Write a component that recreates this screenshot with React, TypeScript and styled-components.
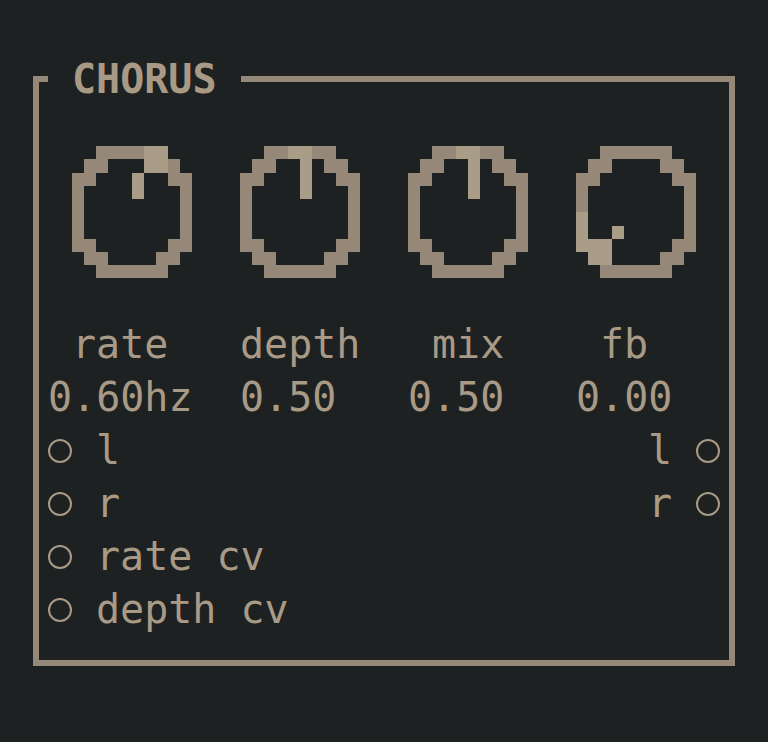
import styled, { createGlobalStyle } from "styled-components";

// terminal-like cell grid: every glyph cell is 24 x 53
const BG = "#1e2122";
const LINE = "#968878";
const LIT = "#aa9d87";
const TEXT = "#a89a85";

type Cell = [number, number]; // [row, col] on the 10 x 10 knob bitmap

type KnobData = {
  label: string;
  value: string;
  lit: Cell[];
  pointer: Cell[];
};

const RING_ROWS: number[][] = [
  [2, 3, 4, 5, 6, 7],
  [1, 2, 7, 8],
  [0, 1, 8, 9],
  [0, 9],
  [0, 9],
  [0, 9],
  [0, 9],
  [0, 1, 8, 9],
  [1, 2, 7, 8],
  [2, 3, 4, 5, 6, 7],
];

const RING: Cell[] = RING_ROWS.flatMap((cols, row) =>
  cols.map((col) => [row, col] as Cell)
);

const KNOBS: KnobData[] = [
  {
    label: "rate",
    value: "0.60hz",
    lit: [
      [0, 6],
      [0, 7],
      [1, 6],
      [1, 7],
    ],
    pointer: [
      [2, 5],
      [3, 5],
    ],
  },
  {
    label: "depth",
    value: "0.50",
    lit: [
      [0, 4],
      [0, 5],
    ],
    pointer: [
      [1, 5],
      [2, 5],
      [3, 5],
    ],
  },
  {
    label: "mix",
    value: "0.50",
    lit: [
      [0, 4],
      [0, 5],
    ],
    pointer: [
      [1, 5],
      [2, 5],
      [3, 5],
    ],
  },
  {
    label: "fb",
    value: "0.00",
    lit: [
      [5, 0],
      [6, 0],
      [7, 0],
      [7, 1],
      [7, 2],
      [8, 1],
      [8, 2],
    ],
    pointer: [[6, 3]],
  },
];

const INPUTS = ["l", "r", "rate cv", "depth cv"];
const OUTPUTS = ["l", "r"];

// knob i starts at grid column 2 + 7i and is 5 cells wide
const knobCol = (i: number) => 2 + i * 7;
const centred = (i: number, text: string) =>
  knobCol(i) + Math.floor((5 - text.length) / 2);

const GlobalStyle = createGlobalStyle`
  html, body {
    margin: 0;
    background: ${BG};
  }
  body {
    font-family: "DejaVu Sans Mono", "Liberation Mono", monospace;
  }
  #root {
    display: flow-root;
  }
`;

const Knob = ({ data, col }: { data: KnobData; col: number }) => (
  <StyledKnob
    $col={col}
    viewBox="0 0 10 10"
    preserveAspectRatio="none"
    shapeRendering="crispEdges"
  >
    {RING.map(([r, c]) => (
      <rect key={`r${r}-${c}`} x={c} y={r} width={1} height={1} fill={LINE} />
    ))}
    {[...data.lit, ...data.pointer].map(([r, c]) => (
      <rect key={`l${r}-${c}`} x={c} y={r} width={1} height={1} fill={LIT} />
    ))}
  </StyledKnob>
);

const App = () => (
  <>
    <GlobalStyle />
    <StyledPanel>
      <StyledTitle>CHORUS</StyledTitle>
      <StyledGrid>
        {KNOBS.map((knob, i) => (
          <Knob key={knob.label} data={knob} col={knobCol(i)} />
        ))}
        {KNOBS.map((knob, i) => (
          <StyledText
            key={`label-${knob.label}`}
            $col={centred(i, knob.label)}
            $row={5}
            $len={knob.label.length}
          >
            {knob.label}
          </StyledText>
        ))}
        {KNOBS.map((knob, i) => (
          <StyledText
            key={`value-${knob.label}`}
            $col={centred(i, knob.value)}
            $row={6}
            $len={knob.value.length}
          >
            {knob.value}
          </StyledText>
        ))}
        {INPUTS.map((name, i) => (
          <StyledPortGroup key={`in-${name}`}>
            <StyledJack $col={1} $row={7 + i} />
            <StyledText $col={3} $row={7 + i} $len={name.length}>
              {name}
            </StyledText>
          </StyledPortGroup>
        ))}
        {OUTPUTS.map((name, i) => (
          <StyledPortGroup key={`out-${name}`}>
            <StyledText $col={27 - name.length} $row={7 + i} $len={name.length}>
              {name}
            </StyledText>
            <StyledJack $col={28} $row={7 + i} />
          </StyledPortGroup>
        ))}
      </StyledGrid>
    </StyledPanel>
  </>
);

const StyledPanel = styled.section`
  position: relative;
  width: fit-content;
  margin: 76px 0 0 33px;
  padding: 24px 9px;
  border: 6px solid ${LINE};
`;

const StyledTitle = styled.h1`
  position: absolute;
  top: -29px;
  left: 9px;
  margin: 0;
  padding: 0 24px;
  background: ${BG};
  color: ${TEXT};
  font-size: 40px;
  font-weight: bold;
  line-height: 53px;
  white-space: pre;
`;

const StyledGrid = styled.div`
  display: grid;
  grid-template-columns: repeat(28, 24px);
  grid-auto-rows: 53px;
`;

const StyledPortGroup = styled.div`
  display: contents;
`;

const StyledKnob = styled.svg<{ $col: number }>`
  grid-column: ${({ $col }) => `${$col} / span 5`};
  grid-row: 1 / span 4;
  align-self: start;
  width: 120px;
  height: 132.5px;
  margin-top: 39.75px;
`;

const StyledText = styled.span<{ $col: number; $row: number; $len: number }>`
  grid-column: ${({ $col, $len }) => `${$col} / span ${$len}`};
  grid-row: ${({ $row }) => $row};
  color: ${TEXT};
  font-size: 40px;
  line-height: 53px;
  white-space: pre;
`;

const StyledJack = styled.span<{ $col: number; $row: number }>`
  grid-column: ${({ $col }) => $col};
  grid-row: ${({ $row }) => $row};
  justify-self: center;
  align-self: center;
  box-sizing: border-box;
  width: 24px;
  height: 24px;
  border: 2px solid ${TEXT};
  border-radius: 50%;
`;

export default App;
